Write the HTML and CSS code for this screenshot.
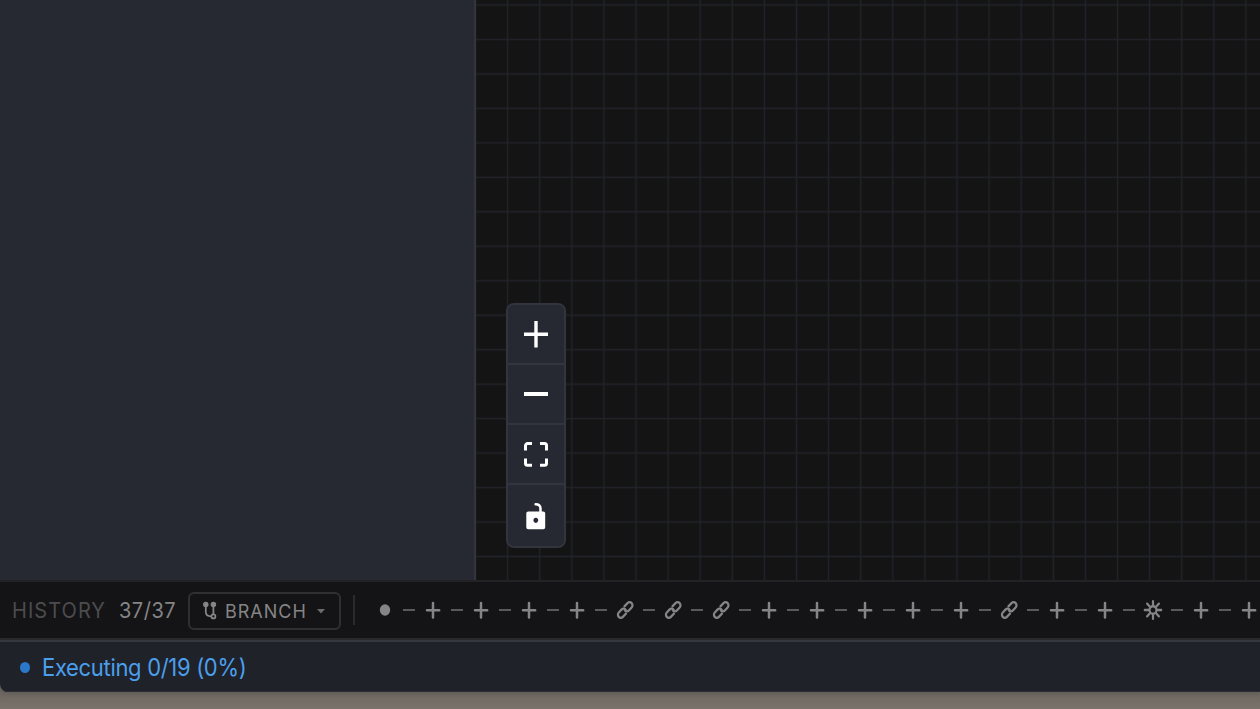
FILE: index.html
```html
<!DOCTYPE html>
<html lang="en">
<head>
    <meta charset="UTF-8">
    <meta name="viewport" content="width=device-width, initial-scale=1.0">
    <title>Workflow Editor</title>
    <link rel="stylesheet" href="styles.css">
</head>
<body>
    <svg class="symbols" width="0" height="0">
        <symbol id="icon-dot" viewBox="0 0 24 26">
            <ellipse cx="12" cy="13" rx="5.2" ry="5.7" fill="currentColor"/>
        </symbol>
        <symbol id="icon-add" viewBox="0 0 24 26">
            <path d="M12 6v14.4M6 13.2h12.2" stroke="currentColor" stroke-width="2.5" stroke-linecap="round"/>
        </symbol>
        <symbol id="icon-link" viewBox="0 0 24 26">
            <g transform="translate(12.2 13) scale(1 1.07) rotate(-45)" fill="none" stroke="currentColor" stroke-width="2.2" stroke-linecap="round">
                <path d="M-1.8 2.9h-4.400a2.900 2.900 0 0 1 0-5.800h3.800a2.900 2.900 0 0 1 2.900 2.900"/>
                <path d="M1.8 -2.9h4.400a2.900 2.900 0 0 1 0 5.800h-3.800a2.900 2.900 0 0 1 -2.900 -2.900"/>
            </g>
        </symbol>
        <symbol id="icon-gear" viewBox="0 0 24 26">
            <g transform="translate(12 13) scale(1 1.07)" fill="none" stroke="currentColor" stroke-width="2.2" stroke-linecap="round">
                <circle r="3.5"/>
                <path d="M0-4.6v-3.6M0 4.6v3.6M-4.6 0h-3.6M4.6 0h3.6M3.3-3.3l2.6-2.6M-3.3-3.3l-2.6-2.6M3.3 3.3l2.6 2.6M-3.3 3.3l-2.6 2.6"/>
            </g>
        </symbol>
    </svg>

    <div class="app">
        <div class="workspace">
            <div class="sidebar"></div>
            <div class="canvas">
                <svg class="grid" width="100%" height="100%">
                    <defs>
                        <pattern id="grid-lines" x="15.55" y="-12.25" width="32.1" height="34.47" patternUnits="userSpaceOnUse">
                            <path d="M16.05 0V34.47M0 17.23H32.1" stroke="#21232a" stroke-width="1.4"/>
                        </pattern>
                    </defs>
                    <rect width="100%" height="100%" fill="url(#grid-lines)"/>
                </svg>
                <div class="controls">
                    <button class="control">
                        <svg width="28" height="30" viewBox="0 0 28 30"><path d="M14 2v26.5M2 15.2h24" stroke="#fff" stroke-width="3.4"/></svg>
                    </button>
                    <button class="control">
                        <svg width="28" height="30" viewBox="0 0 28 30"><path d="M2 14.9h24" stroke="#fff" stroke-width="4"/></svg>
                    </button>
                    <button class="control">
                        <svg width="28" height="30" viewBox="0 0 28 30"><path d="M3.5 11.4V6.600a2 2 0 0 1 2-2H10M18 4.600h4.5a2 2 0 0 1 2 2V11.400M24.5 19.400v4.800a2 2 0 0 1-2 2H18M10 26.200H5.5a2 2 0 0 1-2-2V19.400" fill="none" stroke="#fff" stroke-width="3"/></svg>
                    </button>
                    <button class="control">
                        <svg width="28" height="30" viewBox="0 0 28 30">
                            <path d="M13.6 3.2c3.2 0 4.9 2 4.9 4.5V13" fill="none" stroke="#fff" stroke-width="2.5" stroke-linecap="round"/>
                            <path fill="#fff" fill-rule="evenodd" d="M6.2 10.4h15.1a1.9 1.9 0 0 1 1.9 1.9v14a1.9 1.9 0 0 1-1.9 1.9H6.2a1.900 1.900 0 0 1-1.9-1.9v-14A1.9 1.9 0 0 1 6.2 10.4zM13.8 16.7a2.4 2.6 0 1 0 .01 0z"/>
                        </svg>
                    </button>
                </div>
            </div>
        </div>

        <div class="history">
            <span class="history-label">HISTORY</span>
            <span class="history-count">37/37</span>
            <button class="branch">
                <svg width="16" height="20" viewBox="0 0 16 20" fill="none" stroke="#858585">
                    <circle cx="3.8" cy="3.4" r="2" fill="#858585" stroke-width="1.5"/>
                    <circle cx="11.4" cy="3.4" r="2" fill="#858585" stroke-width="1.5"/>
                    <circle cx="11.4" cy="15.4" r="2" stroke-width="1.7"/>
                    <path d="M3.8 6v5.1q0 4.3 5.3 4.3M11.4 6v7.4" stroke-width="1.8"/>
                </svg>
                <span class="branch-text">BRANCH</span>
                <svg class="caret" width="8" height="5" viewBox="0 0 8 5"><path d="M0 0h8L4 4.6z" fill="#6b6b6b"/></svg>
            </button>
            <div class="divider"></div>
            <div class="timeline" id="timeline"></div>
        </div>

        <div class="status">
            <span class="status-dot"></span>
            <span class="status-text">Executing 0/19 (0%)</span>
        </div>
    </div>

    <script>
        const timeline = document.getElementById('timeline');
        const steps = [
            'dot', 'add', 'add', 'add', 'add', 'link', 'link', 'link', 'add', 'add',
            'add', 'add', 'add', 'link', 'add', 'add', 'gear', 'add', 'add'
        ];

        timeline.innerHTML = steps
            .map(step => `<svg class="step" width="24" height="26"><use href="#icon-${step}"/></svg>`)
            .join('<span class="dash"></span>');
    </script>
</body>
</html>
```

FILE: styles.css
```css
* {
    box-sizing: border-box;
}
body {
    margin: 0;
    height: 709px;
    overflow: hidden;
    background: linear-gradient(#6b665f 691px, #79736b 709px);
    font-family: 'Inter', sans-serif;
}
.symbols {
    display: block;
}
button {
    margin: 0;
    font-family: inherit;
}
.app {
    height: 692px;
    display: flex;
    flex-direction: column;
    overflow: hidden;
    border-bottom-left-radius: 8px;
    box-shadow: 0 1px 5px rgba(0, 0, 0, 0.15);
}
.workspace {
    height: 580px;
    display: flex;
}
.sidebar {
    width: 476px;
    background: #262932;
    border-right: 2px solid #32353e;
}
.canvas {
    flex: 1;
    display: flex;
    align-items: flex-end;
    position: relative;
    padding: 0 0 32px 30px;
    background: #141414;
}
/* the grid sits under the controls */
.grid {
    position: absolute;
    top: 0;
    left: 0;
}
.controls {
    position: relative;
    width: 60px;
    height: 245px;
    display: flex;
    flex-direction: column;
    border: 2px solid #32353e;
    border-radius: 8px;
    background: #262932;
    overflow: hidden;
}
.control {
    height: 60px;
    display: flex;
    align-items: center;
    justify-content: center;
    padding: 0;
    border: none;
    border-bottom: 2px solid #32353e;
    background: #262932;
}
.control:last-child {
    height: 61px;
    border-bottom: none;
}
.history {
    height: 60px;
    display: flex;
    align-items: center;
    padding-left: 12px;
    border-top: 2px solid #232325;
    border-bottom: 2px solid #29292b;
    background: #141416;
    white-space: nowrap;
    overflow: hidden;
}
.history-label,
.history-count,
.branch-text,
.status-text {
    transform: scaleY(1.074);
}
.history-label {
    flex: none;
    width: 107px;
    font-size: 20px;
    letter-spacing: 1.05px;
    color: #4c4c4e;
}
.history-count {
    flex: none;
    width: 69px;
    font-size: 20px;
    letter-spacing: 0.5px;
    color: #858585;
}
.branch {
    flex: none;
    width: 153px;
    height: 38px;
    margin-top: 2px;
    display: flex;
    align-items: center;
    padding: 0 14px 0 12px;
    border: 2px solid #303032;
    border-radius: 6px;
    background: #141416;
}
.branch-text {
    margin-left: 7px;
    font-size: 18px;
    letter-spacing: 1px;
    color: #858585;
}
.caret {
    margin-left: auto;
}
.divider {
    flex: none;
    width: 2px;
    height: 30px;
    margin-left: 12px;
    background: #2a2a2c;
}
.timeline {
    flex: none;
    display: flex;
    align-items: center;
    gap: 6px;
    margin-left: 18px;
}
.step {
    flex: none;
    color: #858585;
}
.dash {
    flex: none;
    width: 12px;
    height: 2px;
    background: #5a5a5c;
}
.status {
    height: 52px;
    display: flex;
    align-items: center;
    gap: 12px;
    padding-left: 20px;
    border-top: 2px solid #343841;
    border-bottom: 1px solid #2b2d33;
    background: #1f2229;
}
.status-dot {
    width: 10px;
    height: 11px;
    margin-top: 1px;
    border-radius: 50%;
    background: #2b78cb;
}
.status-text {
    font-size: 22px;
    letter-spacing: -0.32px;
    color: #4b9fed;
}
```
